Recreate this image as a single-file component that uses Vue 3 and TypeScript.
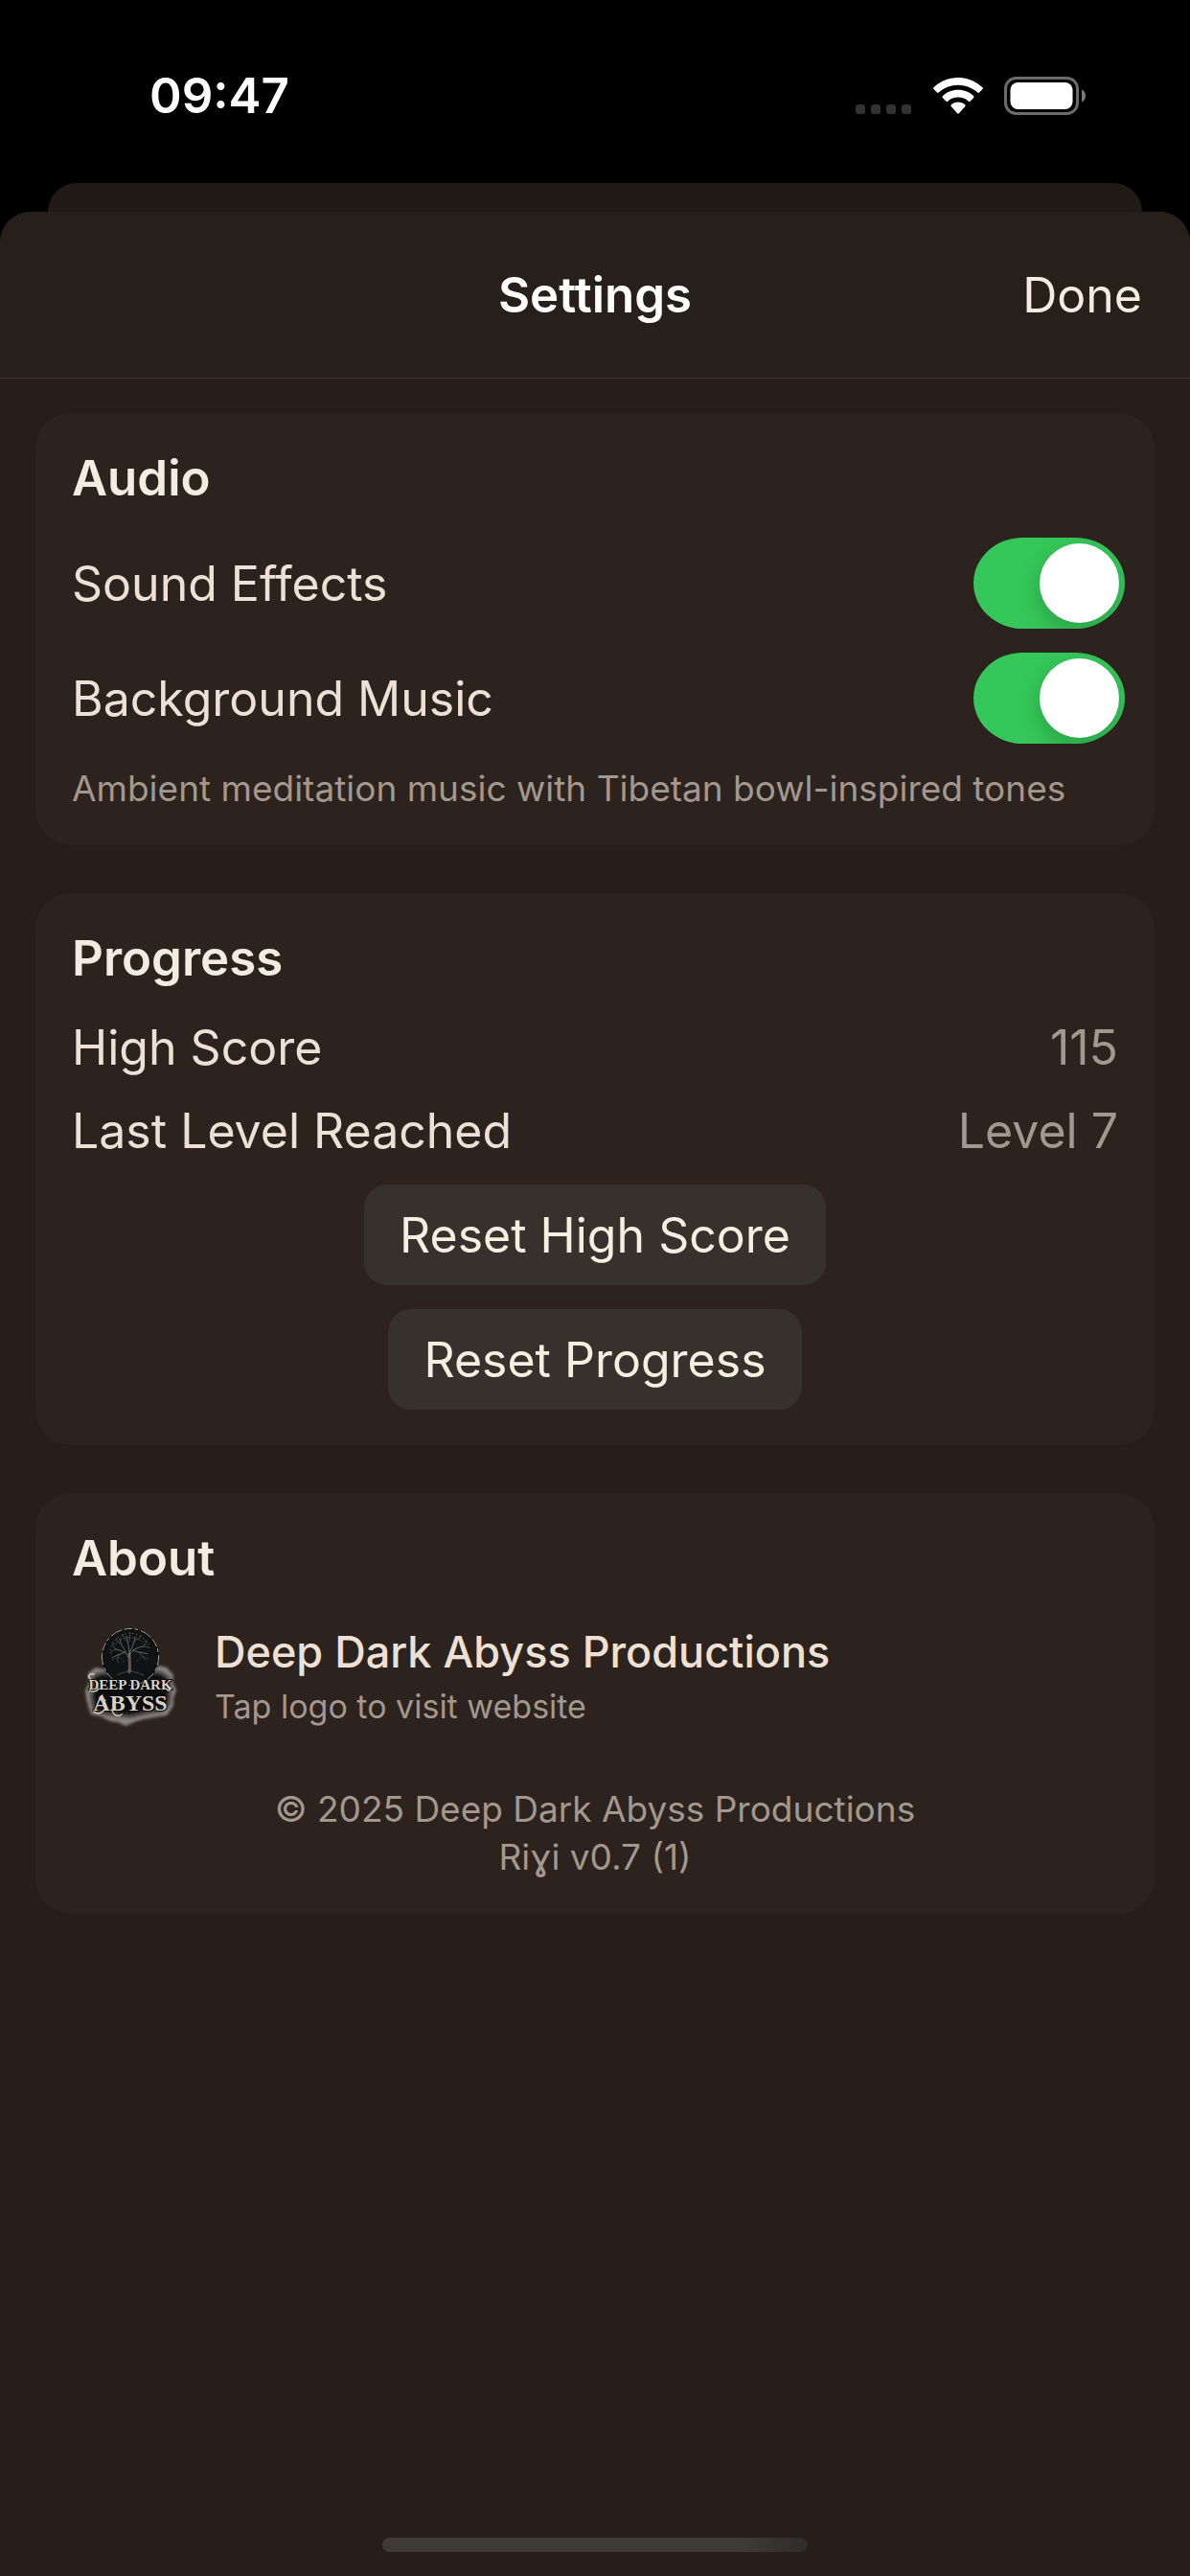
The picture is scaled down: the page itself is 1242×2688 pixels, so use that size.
<script setup lang="ts">
import { ref } from 'vue'

interface Stat {
  label: string
  value: string
}

const soundEffects = ref(true)
const backgroundMusic = ref(true)

const stats = ref<Stat[]>([
  { label: 'High Score', value: '115' },
  { label: 'Last Level Reached', value: 'Level 7' },
])

function resetHighScore(): void {
  stats.value[0].value = '0'
}

function resetProgress(): void {
  stats.value[1].value = 'Level 1'
}
</script>

<template>
  <div class="screen">
    <header class="status">
      <time class="clock">09:47</time>
      <div class="indicators">
        <span class="signal" aria-label="No signal"><i v-for="n in 4" :key="n"></i></span>
        <svg class="wifi" viewBox="0 0 52 38" width="52" height="38" aria-hidden="true">
          <path fill="#fff" d="M26 0C36 0 45 4 51.500 10.300Q52.300 11.200 51.500 12.100L48 15.600Q47.200 16.300 46.300 15.500C40.800 10.500 33.800 7.700 26 7.700S11.200 10.500 5.700 15.500Q4.800 16.300 4 15.600L.5 12.100Q-.3 11.200 .5 10.300C7 4 16 0 26 0Z" />
          <path fill="#fff" d="M26 12.800C32.400 12.800 38 15.200 42.200 19.200Q43 20.100 42.200 21L38.500 24.700Q37.700 25.400 36.800 24.700C33.900 22.100 30.200 20.600 26 20.600S18.100 22.100 15.200 24.700Q14.300 25.400 13.500 24.700L9.800 21Q9 20.100 9.800 19.200C14 15.200 19.600 12.800 26 12.800Z" />
          <path fill="#fff" d="M26 25.600C28.800 25.600 31.300 26.500 33.200 28.200Q34.100 29 33.300 29.900L26.900 37.200Q26 38 25.100 37.200L18.700 29.900Q17.900 29 18.800 28.200C20.700 26.500 23.200 25.600 26 25.600Z" />
        </svg>
        <svg class="battery" viewBox="0 0 85 40" width="85" height="40" aria-hidden="true">
          <rect x="1.500" y="1.500" width="75" height="37" rx="11" fill="none" stroke="#6b6b6b" stroke-width="3" />
          <rect x="6.500" y="6" width="65" height="28" rx="8" fill="#fff" />
          <path d="M81 13.500C83.500 14.500 85 17 85 20S83.500 25.500 81 26.500Z" fill="#7a7a7a" />
        </svg>
      </div>
    </header>

    <div class="sheet-behind"></div>

    <main class="sheet">
      <div class="navbar">
        <h1>Settings</h1>
        <button class="done" type="button">Done</button>
      </div>

      <div class="cards">
        <section class="card">
          <h2>Audio</h2>
          <div class="stack">
            <div class="row toggle-row">
              <label for="sound-effects">Sound Effects</label>
              <input id="sound-effects" v-model="soundEffects" class="switch" type="checkbox" role="switch" />
            </div>
            <div class="row toggle-row">
              <label for="background-music">Background Music</label>
              <input id="background-music" v-model="backgroundMusic" class="switch" type="checkbox" role="switch" />
            </div>
            <p class="caption">Ambient meditation music with Tibetan bowl-inspired tones</p>
          </div>
        </section>

        <section class="card">
          <h2>Progress</h2>
          <div class="stack">
            <div v-for="stat in stats" :key="stat.label" class="row">
              <span>{{ stat.label }}</span>
              <span class="value">{{ stat.value }}</span>
            </div>
            <button class="reset" type="button" @click="resetHighScore">Reset High Score</button>
            <button class="reset" type="button" @click="resetProgress">Reset Progress</button>
          </div>
        </section>

        <section class="card">
          <h2>About</h2>
          <div class="studio">
            <a class="logo" href="#" aria-label="Deep Dark Abyss website">
              <svg viewBox="0 0 125 125" width="125" height="125" aria-hidden="true">
                <defs>
                  <filter id="smoke" x="-20%" y="-20%" width="140%" height="140%">
                    <feGaussianBlur stdDeviation="1.500" />
                  </filter>
                  <filter id="shade" x="-20%" y="-20%" width="140%" height="140%">
                    <feGaussianBlur stdDeviation="2.500" />
                  </filter>
                </defs>
                <path filter="url(#smoke)" fill="#8b8480" d="M17 58L25 52L34 54L44 60L82 58L90 50L99 52L106 60L105 67L109 76L106 84L106 92L99 102L86 104L74 106L65 109L56 113L48 109L40 108L30 103L20 101L17 92L15 84L14 76L18 68Z" />
                <path filter="url(#shade)" fill="#0d1010" d="M22 61L32 58L92 57L101 63L102 75L101 90L94 97L78 99L62 103L50 102L24 98L21 84Z" />
                <circle cx="61" cy="41" r="29" fill="#101314" stroke="#060707" stroke-width="2" />
                <circle cx="61" cy="41" r="29.500" fill="none" stroke="#aaa49b" stroke-width="1" stroke-dasharray="9 2 4 3 13 2" />
                <g fill="none" stroke="#8d8780" stroke-linecap="round">
                  <path stroke-width="3" opacity=".6" d="M60 57C61 50 60 45 60 38" />
                  <path stroke-width="1" opacity=".7" d="M60 42C55 35 51 34 46 33M60 40C62 32 69 32 74 30M60 39C60 30 58 26 57 19M60 36C64 30 65 25 66 20M57 37C52 29 50 25 50 22M64 34C70 37 75 36 79 38M55 36C50 39 46 39 42 42" />
                  <path stroke-width="1" opacity=".45" d="M46 33C43 31 42 28 43 26M46 33C42 34 40 36 40 38M74 30C77 28 78 26 77 24M74 30L80 31M57 24C54 21 53 19 53 17M65 25C69 22 72 21 73 18M50 27C47 26 46 23 47 21M70 36C73 40 75 41 77 44M50 38C48 42 47 44 48 47M60 25L61 16" />
                  <path stroke-width="1" opacity=".5" stroke-dasharray="1 3" d="M40 34C42 24 50 17 61 16C72 17 80 24 82 34M43 44C48 39 52 43 54 46M68 45C72 39 77 41 80 43M45 28C50 22 56 20 61 21C67 20 74 24 77 29" />
                  <path stroke-width="1" opacity=".45" d="M60 55C55 58 51 57 47 60M61 55C66 58 70 57 75 60" />
                </g>
                <g class="wordmark" text-anchor="middle">
                  <text x="61" y="75" font-size="15">DEEP DARK</text>
                  <text x="61" y="97" font-size="24">ABYSS</text>
                </g>
                <path fill="none" stroke="#d0c9bd" stroke-width="1.500" stroke-linecap="round" d="M19 64C16 61 18 58 23 59M19 76C22 78 26 77 28 74M98 74C101 77 103 76 103 73M32 81C26 84 30 88 35 86M34 96C29 102 25 100 23 98M42 96C43 102 48 104 52 101" />
              </svg>
            </a>
            <div class="studio-text">
              <p class="studio-name">Deep Dark Abyss Productions</p>
              <p class="studio-hint">Tap logo to visit website</p>
            </div>
          </div>
          <footer class="legal">
            <p class="caption">© 2025 Deep Dark Abyss Productions</p>
            <p class="caption">Riɣi v0.7 (1)</p>
          </footer>
        </section>
      </div>

      <div class="home-bar"></div>
    </main>
  </div>
</template>

<style>
body {
  margin: 0;
  background: #000;
}
</style>

<style scoped>
.screen {
  display: flex;
  flex-direction: column;
  min-height: 100vh;
  background: #000;
  color: #ede0d4;
  font-family: Inter, "Liberation Sans", sans-serif;
  font-size: 50px;
  line-height: 62px;
}

h1,
h2,
p {
  margin: 0;
}

h1,
h2,
.clock {
  font-size: 51px;
  font-weight: 600;
}

button {
  border: 0;
  font: inherit;
  color: #f5ebe0;
}

.status {
  display: flex;
  align-items: center;
  justify-content: space-between;
  box-sizing: border-box;
  height: 191px;
  padding: 9px 109px 0 156px;
  color: #fff;
}

.indicators {
  display: flex;
  align-items: center;
}

.signal {
  display: flex;
  align-self: flex-end;
  gap: 6px;
  margin-right: 23px;
  padding-bottom: 1px;
}

.signal i {
  width: 10px;
  height: 10px;
  border-radius: 3px;
  background: #333;
}

.wifi {
  margin-right: 22px;
}

.sheet-behind {
  height: 30px;
  margin: 0 50px;
  border-radius: 30px 30px 0 0;
  background: #201b17;
}

.sheet {
  display: flex;
  flex: 1;
  flex-direction: column;
  border-radius: 32px 32px 0 0;
  background: #271e1a;
}

.navbar {
  display: grid;
  grid-template-columns: 1fr auto 1fr;
  align-items: center;
  height: 173px;
  padding: 0 50px;
  border-bottom: 1px solid #3d3733;
  border-radius: 32px 32px 0 0;
  background: #261f1a;
}

.navbar h1 {
  grid-column: 2;
  color: #fff;
}

.done {
  justify-self: end;
  padding: 0;
  background: none;
}

.cards {
  display: flex;
  flex-direction: column;
  gap: 50px;
  padding: 36px 37px;
}

.card {
  padding: 37px 38px;
  border-radius: 37px;
  background: #2c221e;
}

.card h2 {
  margin-bottom: 31px;
  color: #f5ebe0;
}

.stack {
  display: flex;
  flex-direction: column;
  gap: 25px;
}

.row {
  display: flex;
  align-items: center;
  justify-content: space-between;
}

.toggle-row {
  margin-right: -7px;
}

.value,
.caption,
.studio-hint {
  color: #a3988e;
}

.caption {
  font-size: 37px;
  line-height: 44px;
}

.switch {
  appearance: none;
  box-sizing: border-box;
  width: 158px;
  height: 95px;
  margin: 0;
  padding: 6px;
  overflow: hidden;
  border-radius: 52px / 48px;
  background: #4a423e;
}

.switch::before {
  content: "";
  display: block;
  width: 83px;
  height: 83px;
  border-radius: 50%;
  background: #fff;
  box-shadow: 0 9px 24px rgba(0, 0, 0, 0.2);
}

.switch:checked {
  background: #35c759;
}

.switch:checked::before {
  margin-left: auto;
}

.reset {
  align-self: center;
  height: 105px;
  padding: 0 37px;
  border-radius: 24px;
  background: #37312e;
  color: #f5efe0;
}

.studio {
  display: flex;
  align-items: center;
  gap: 24px;
}

.logo svg {
  display: block;
}

.wordmark {
  fill: #d8d1c5;
  stroke: #080a0a;
  stroke-width: 2px;
  paint-order: stroke;
  font-family: "Liberation Serif", serif;
  font-weight: 700;
}

.studio-text {
  display: flex;
  flex-direction: column;
  gap: 10px;
  padding-bottom: 4px;
}

.studio-name {
  font-size: 45px;
  font-weight: 500;
  line-height: 54px;
}

.studio-hint {
  font-size: 34px;
  line-height: 40px;
}

.legal {
  display: flex;
  flex-direction: column;
  gap: 6px;
  padding-top: 53px;
  text-align: center;
}

.home-bar {
  align-self: center;
  width: 444px;
  height: 15px;
  margin: auto 0 25px;
  border-radius: 8px;
  background: linear-gradient(90deg, #3d3a37 85%, #302b28);
}
</style>
